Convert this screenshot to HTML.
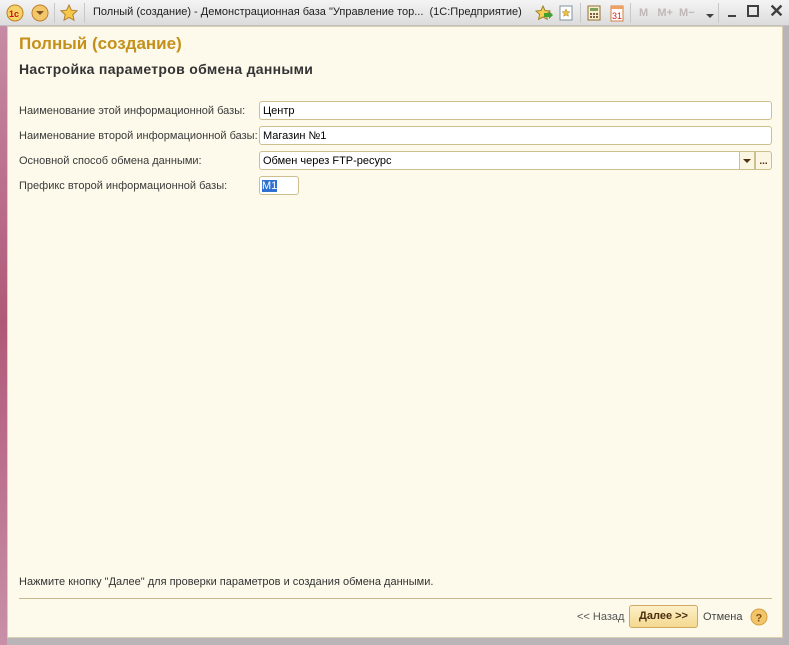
<!DOCTYPE html>
<html><head><meta charset="utf-8"><style>
*{margin:0;padding:0;box-sizing:border-box}
body{width:789px;height:645px;overflow:hidden;background:#b8b4b8;font-family:"Liberation Sans",Arial,sans-serif;position:relative}
.frame-l{position:absolute;left:0;top:0;width:7px;height:645px;background:linear-gradient(#c890a8,#b05878 50%,#c890a8)}
.title{position:absolute;left:0;top:0;width:789px;height:26px;background:linear-gradient(#f4f4f4,#dcdcdc);border-bottom:1px solid #c0c0c0}
.title span{position:absolute;top:6px;font-size:11px;color:#202020;white-space:nowrap}
.content{position:absolute;left:7px;top:26px;width:776px;height:612px;background:#fdf9eb;border:1px solid #d8d0b0}
.t{position:absolute;white-space:nowrap;color:#333}
.inp{position:absolute;height:19px;background:#fff;border:1px solid #cdbf8e;border-radius:3px;font-size:11px;padding:3px 3px;color:#000}
.lbl{font-size:11px;color:#3a3a3a}
</style></head><body>
<div class="frame-l"></div>
<div class="title">
<svg style="position:absolute;left:6px;top:4px" width="18" height="18"><circle cx="9" cy="9" r="8" fill="#f6d36a" stroke="#c08020"/><text x="3" y="13" font-size="9" font-weight="bold" fill="#d01010" font-family="Liberation Sans">1c</text></svg>
<svg style="position:absolute;left:31px;top:4px" width="18" height="18"><circle cx="9" cy="9" r="8" fill="#f2c66a" stroke="#c08030"/><path d="M5 7l4 4 4-4z" fill="#805020"/></svg>
<div style="position:absolute;left:54px;top:3px;width:1px;height:20px;background:#c8c8c8"></div>
<svg style="position:absolute;left:60px;top:4px" width="18" height="18"><path d="M9 1l2.4 5.2 5.6.6-4.2 3.8 1.2 5.6L9 13.4 4 16.2l1.2-5.6L1 6.8l5.6-.6z" fill="#f5c84a" stroke="#b08030"/></svg>
<div style="position:absolute;left:84px;top:3px;width:1px;height:20px;background:#c8c8c8"></div>
<span style="left:93px">Полный (создание) - Демонстрационная база "Управление тор...&nbsp; (1С:Предприятие)</span>
<svg style="position:absolute;left:535px;top:5px" width="18" height="16"><path d="M8 1l2 4.5 5 .5-3.7 3.3 1 5L8 12 3.6 14.3l1-5L1 6l5-.5z" fill="#f5d050" stroke="#a08030"/><path d="M9 8h5v-2l4 4-4 4v-2H9z" fill="#40a030"/></svg>
<svg style="position:absolute;left:559px;top:5px" width="14" height="16"><rect x="1" y="1" width="12" height="14" fill="#fff" stroke="#8090a0"/><path d="M7 4l1.2 2.6 2.6.3-2 1.8.6 2.6L7 10l-2.4 1.3.6-2.6-2-1.8 2.6-.3z" fill="#f0c040" stroke="#a08030" stroke-width=".5"/></svg>
<div style="position:absolute;left:580px;top:3px;width:1px;height:20px;background:#c8c8c8"></div>
<svg style="position:absolute;left:587px;top:5px" width="14" height="16"><rect x="1" y="1" width="12" height="14" fill="#f8f0d0" stroke="#907030"/><rect x="3" y="3" width="8" height="3" fill="#80a060"/><path d="M3 8h2v2H3zM6 8h2v2H6zM9 8h2v2H9zM3 11h2v2H3zM6 11h2v2H6zM9 11h2v2H9z" fill="#806040"/></svg>
<svg style="position:absolute;left:610px;top:4px" width="14" height="18"><rect x="1" y="2" width="12" height="15" fill="#fff" stroke="#d08040"/><rect x="1" y="2" width="12" height="3" fill="#f0a060"/><text x="2" y="15" font-size="9" fill="#d02020" font-family="Liberation Sans">31</text></svg>
<div style="position:absolute;left:630px;top:3px;width:1px;height:20px;background:#c8c8c8"></div>
<span style="left:639px;color:#c0b8b8;font-weight:bold;font-size:11px;top:7px">M&nbsp;&nbsp;&nbsp;M+&nbsp;&nbsp;M−</span>
<div style="position:absolute;left:706px;top:14px;width:0;height:0;border-left:4px solid transparent;border-right:4px solid transparent;border-top:4px solid #404040"></div>
<div style="position:absolute;left:718px;top:3px;width:1px;height:20px;background:#c8c8c8"></div>
<div style="position:absolute;left:728px;top:15px;width:8px;height:2px;background:#404040"></div>
<div style="position:absolute;left:747px;top:5px;width:12px;height:12px;border:2px solid #404040"></div>
<span style="left:769px;top:1px;font-size:18px;color:#404040;font-weight:bold">✕</span>
</div>
<div class="content">
<div class="t" style="left:11px;top:7px;font-size:17px;font-weight:bold;color:#c5901a">Полный (создание)</div>
<div class="t" style="left:11px;top:34px;font-size:14px;font-weight:bold;color:#333;letter-spacing:0.3px">Настройка параметров обмена данными</div>
<div class="t lbl" style="left:11px;top:78px">Наименование этой информационной базы:</div>
<div class="inp" style="left:251px;top:74px;width:513px">Центр</div>
<div class="t lbl" style="left:11px;top:103px">Наименование второй информационной базы:</div>
<div class="inp" style="left:251px;top:99px;width:513px">Магазин №1</div>
<div class="t lbl" style="left:11px;top:128px">Основной способ обмена данными:</div>
<div class="inp" style="left:251px;top:124px;width:496px;border-radius:3px 0 0 3px">Обмен через FTP-ресурс</div>
<div style="position:absolute;left:731px;top:124px;width:16px;height:19px;border:1px solid #cdbf8e;background:#fbf6e2"><div style="position:absolute;left:3px;top:7px;border-left:4px solid transparent;border-right:4px solid transparent;border-top:4px solid #503010"></div></div>
<div style="position:absolute;left:747px;top:124px;width:17px;height:19px;border:1px solid #cdbf8e;border-radius:0 3px 3px 0;background:#fbf6e2;font-size:10px;font-weight:bold;text-align:center;color:#503010;line-height:19px">...</div>
<div class="t lbl" style="left:11px;top:153px">Префикс второй информационной базы:</div>
<div class="inp" style="left:251px;top:149px;width:40px;padding:3px 2px"><span style="background:#3070d0;color:#fff">M1</span></div>
<div class="t lbl" style="left:11px;top:549px;color:#333">Нажмите кнопку "Далее" для проверки параметров и создания обмена данными.</div>
<div style="position:absolute;left:11px;top:571px;width:753px;height:1px;background:#c8b890"></div>
<div class="t lbl" style="left:569px;top:584px;color:#555">&lt;&lt; Назад</div>
<div style="position:absolute;left:621px;top:578px;width:69px;height:23px;border:1px solid #d0a860;border-radius:3px;background:linear-gradient(#fdf0c8,#f5d890);font-size:11px;font-weight:bold;color:#4a3010;text-align:center;line-height:21px">Далее &gt;&gt;</div>
<div class="t lbl" style="left:695px;top:584px;color:#444">Отмена</div>
<svg style="position:absolute;left:742px;top:581px" width="18" height="18"><circle cx="9" cy="9" r="8" fill="#f3c56a" stroke="#d8a040"/><text x="5.5" y="13.5" font-size="11" font-weight="bold" fill="#805010" font-family="Liberation Sans">?</text></svg>
</div>
</body></html>
